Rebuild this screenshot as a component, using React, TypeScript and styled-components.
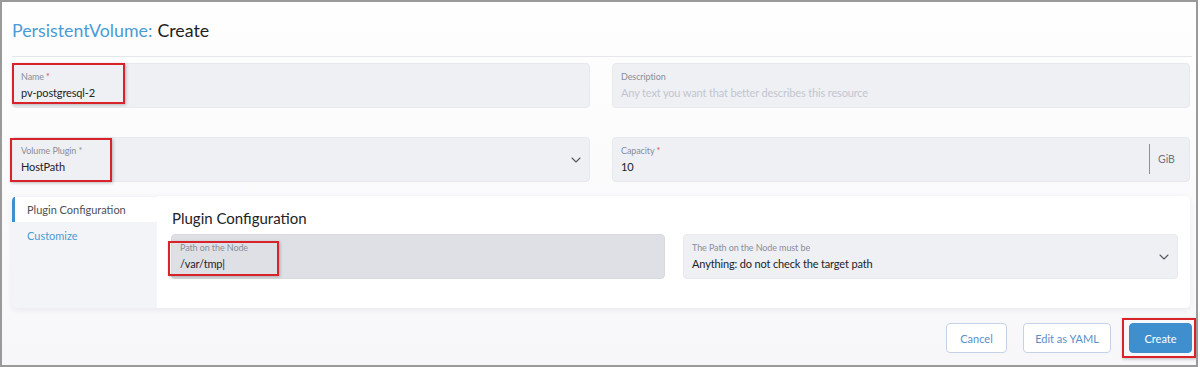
import React from "react";
import styled, { createGlobalStyle } from "styled-components";
import { ChevronDown } from "lucide-react";

const Global = createGlobalStyle`
  html, body { margin: 0; padding: 0; }
  body { font-family: Lato, "Open Sans", sans-serif; background: #fff; }
  * { box-sizing: border-box; }
`;

const Frame = styled.div`
  width: 1198px;
  height: 367px;
  border: 2px solid #9a9a9a;
  background: linear-gradient(#fefefe 0px, #fcfcfd 120px, #f7f7fa 367px);
  display: flex;
  flex-direction: column;
  overflow: hidden;
`;

const Header = styled.div`
  margin: 0 4px 0 10px;
  height: 55px;
  border-bottom: 1px solid #e6e7eb;
  display: flex;
  align-items: center;
  padding-top: 2px;
  font-size: 17.8px;
  color: #1f1f22;
`;

const Crumb = styled.span`
  color: #4b9bd3;
  margin-right: 5px;
`;

const Body = styled.div`
  padding: 6px 6px 0 10px;
  display: flex;
  flex-direction: column;
`;

const Row = styled.div<{ $mb: number }>`
  display: grid;
  grid-template-columns: 578px 578px;
  column-gap: 22px;
  margin-bottom: ${(p) => p.$mb}px;
`;

const Field = styled.div<{ $h?: number; $dark?: boolean }>`
  position: relative;
  height: ${(p) => p.$h ?? 45}px;
  background: ${(p) => (p.$dark ? "#dfe0e6" : "#eef0f4")};
  border-radius: 4px;
  border: 1px solid ${(p) => (p.$dark ? "#d9dae0" : "#e8e9ee")};
  padding: 7px 8px 0 8px;
  display: flex;
  align-items: stretch;
`;

const FieldMain = styled.div`
  flex: 1;
  display: flex;
  flex-direction: column;
`;

const Label = styled.div`
  font-size: 9px;
  color: #8b8e98;
  line-height: 12px;
  letter-spacing: -0.1px;
`;

const Req = styled.span`
  color: #e0474c;
  margin-left: 2px;
`;

const Value = styled.div<{ $ph?: boolean }>`
  font-size: 11px;
  line-height: 16px;
  margin-top: 2px;
  letter-spacing: -0.15px;
  color: ${(p) => (p.$ph ? "#c3c6cf" : "#232327")};
`;

const Chevron = styled.div`
  display: flex;
  align-items: center;
  margin-right: -3px;
  padding-bottom: 7px;
  color: #555860;
`;

const Suffix = styled.div`
  display: flex;
  align-items: center;
  margin: -1px 0 7px 0;
  border-left: 1px solid #8d9099;
  padding-left: 8px;
  width: 32px;
  font-size: 10.5px;
  color: #6f737c;
`;

const Mark = styled.div<{ $l: number; $t: number; $w: number; $h: number }>`
  position: absolute;
  left: ${(p) => p.$l}px;
  top: ${(p) => p.$t}px;
  width: ${(p) => p.$w}px;
  height: ${(p) => p.$h}px;
  border: 2px solid #d8232a;
  box-shadow: 1px 1px 3px rgba(0, 0, 0, 0.25);
  pointer-events: none;
`;

const Panel = styled.div`
  display: flex;
  height: 112px;
  border-radius: 5px;
  box-shadow: 0 2px 6px rgba(40, 40, 70, 0.07);
  overflow: hidden;
  width: 1178px;
`;

const Tabs = styled.div`
  width: 145px;
  background: #f3f4f8;
  display: flex;
  flex-direction: column;
  padding-top: 1px;
`;

const Tab = styled.div<{ $active?: boolean }>`
  height: 25px;
  display: flex;
  align-items: center;
  padding-left: ${(p) => (p.$active ? 12 : 15)}px;
  font-size: 11px;
  color: ${(p) => (p.$active ? "#4d4f57" : "#4b9bd3")};
  background: ${(p) => (p.$active ? "#fff" : "transparent")};
  border-left: ${(p) => (p.$active ? "3px solid #3d8fd0" : "none")};
  margin-bottom: ${(p) => (p.$active ? 1 : 0)}px;
`;

const Content = styled.div`
  flex: 1;
  background: #fff;
  padding: 12px 12px 0 14px;
  display: flex;
  flex-direction: column;
`;

const Heading = styled.div`
  font-size: 15px;
  color: #222226;
  padding-left: 1px;
  height: 26px;
  line-height: 21px;
`;

const SubRow = styled.div`
  display: grid;
  grid-template-columns: 494px 495px;
  column-gap: 18px;
`;

const Footer = styled.div`
  display: flex;
  justify-content: flex-end;
  align-items: center;
  padding: 15px 0 0 0;
  margin-right: -2px;
  gap: 16px;
`;

const Button = styled.button<{ $primary?: boolean; $w: number; $ml?: number }>`
  position: relative;
  width: ${(p) => p.$w}px;
  height: 30px;
  margin-left: ${(p) => p.$ml ?? 0}px;
  border-radius: 4px;
  font-family: Lato, "Open Sans", sans-serif;
  font-size: 11px;
  border: 1px solid ${(p) => (p.$primary ? "#3d8fd0" : "#c5d2e6")};
  background: ${(p) => (p.$primary ? "#3f8fcf" : "#fff")};
  color: ${(p) => (p.$primary ? "#fff" : "#5a8fc8")};
  padding: 0;
`;

export default function App() {
  return (
    <>
      <Global />
      <Frame>
        <Header>
          <Crumb>PersistentVolume:</Crumb> Create
        </Header>
        <Body>
          <Row $mb={29}>
            <Field>
              <FieldMain>
                <Label>
                  Name<Req>*</Req>
                </Label>
                <Value>pv-postgresql-2</Value>
              </FieldMain>
              <Mark $l={-1} $t={-1} $w={113} $h={41} />
            </Field>
            <Field>
              <FieldMain>
                <Label>Description</Label>
                <Value $ph>Any text you want that better describes this resource</Value>
              </FieldMain>
            </Field>
          </Row>
          <Row $mb={14}>
            <Field>
              <FieldMain>
                <Label>
                  Volume Plugin <span>*</span>
                </Label>
                <Value>HostPath</Value>
              </FieldMain>
              <Chevron>
                <ChevronDown size={16} strokeWidth={1.6} />
              </Chevron>
              <Mark $l={-3} $t={0} $w={102} $h={44} />
            </Field>
            <Field>
              <FieldMain>
                <Label>
                  Capacity<Req>*</Req>
                </Label>
                <Value>10</Value>
              </FieldMain>
              <Suffix>GiB</Suffix>
            </Field>
          </Row>
          <Panel>
            <Tabs>
              <Tab $active>Plugin Configuration</Tab>
              <Tab>Customize</Tab>
            </Tabs>
            <Content>
              <Heading>Plugin Configuration</Heading>
              <SubRow>
                <Field $h={45} $dark>
                  <FieldMain>
                    <Label>Path on the Node</Label>
                    <Value>/var/tmp|</Value>
                  </FieldMain>
                  <Mark $l={-4} $t={6} $w={111} $h={35} />
                </Field>
                <Field $h={45}>
                  <FieldMain>
                    <Label>The Path on the Node must be</Label>
                    <Value>Anything: do not check the target path</Value>
                  </FieldMain>
                  <Chevron>
                    <ChevronDown size={16} strokeWidth={1.6} />
                  </Chevron>
                </Field>
              </SubRow>
            </Content>
          </Panel>
          <Footer>
            <Button $w={61}>Cancel</Button>
            <Button $w={88}>Edit as YAML</Button>
            <Button $primary $w={63} $ml={2}>
              Create
              <Mark $l={-8} $t={-6} $w={74} $h={40} />
            </Button>
          </Footer>
        </Body>
      </Frame>
    </>
  );
}
